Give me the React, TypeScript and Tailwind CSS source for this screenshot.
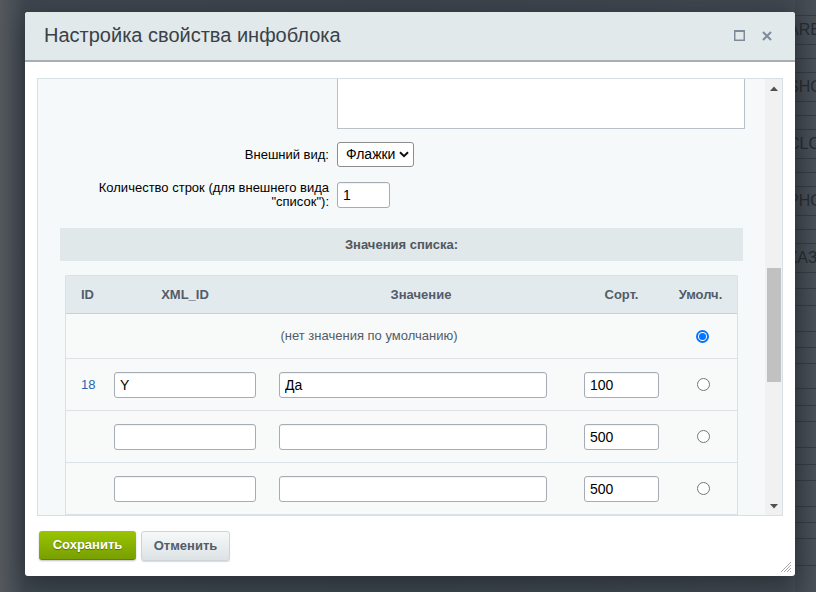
import { type ReactNode } from "react";

const listRows = [
  { id: "18", xml: "Y", value: "Да", sort: "100" },
  { id: "", xml: "", value: "", sort: "500" },
  { id: "", xml: "", value: "", sort: "500" },
];

// rows of the page under the overlay (only a thin strip shows on the right)
const pageRows: { h: string; t?: string }[] = [
  { h: "h-[16px]" },
  { h: "h-[29px]", t: "ARE" },
  { h: "h-[14px]" },
  { h: "h-[14px]" },
  { h: "h-[29px]", t: "SHO" },
  { h: "h-[14px]" },
  { h: "h-[14px]" },
  { h: "h-[29px]", t: "CLO" },
  { h: "h-[14px]" },
  { h: "h-[14px]" },
  { h: "h-[29px]", t: "PHO" },
  { h: "h-[14px]" },
  { h: "h-[14px]" },
  { h: "h-[29px]", t: "КАЗ" },
  { h: "h-[16px]" },
  { h: "h-[17px]" },
  { h: "h-[26px]" },
  { h: "h-[16px]" },
  { h: "h-[16px]" },
  { h: "h-[25px]" },
  { h: "h-[17px]" },
  { h: "h-[16px]" },
  { h: "h-[26px]" },
  { h: "h-[17px]" },
  { h: "h-[16px]" },
  { h: "h-[26px]" },
  { h: "h-[16px]" },
  { h: "h-[16px]" },
  { h: "h-[27px]" },
];

function Radio({ checked }: { checked?: boolean }) {
  if (checked) {
    return (
      <span className="w-[13px] h-[13px] rounded-full bg-[#0075ff] flex items-center justify-center">
        <span className="w-[9px] h-[9px] rounded-full bg-white flex items-center justify-center">
          <span className="w-[7px] h-[7px] rounded-full bg-[#0075ff]" />
        </span>
      </span>
    );
  }
  return <span className="w-[13px] h-[13px] rounded-full border border-[#767676] bg-white" />;
}

function Field({ value, className }: { value: string; className: string }) {
  return (
    <input
      readOnly
      defaultValue={value}
      className={
        "h-[26px] bg-white border border-[#a5acb4] rounded-[3px] px-[5px] text-[14px] text-black outline-none shadow-[inset_0_1px_1px_rgba(0,0,0,0.06)] " +
        className
      }
    />
  );
}

function Label({ children }: { children: ReactNode }) {
  return <div className="w-[291px] text-right text-[13px] leading-[14px] text-black">{children}</div>;
}

export default function App() {
  return (
    <div className="w-[816px] h-[592px] overflow-hidden flex bg-[linear-gradient(90deg,#585c61_0%,#4b5157_2%,#3d464e_3%,#3b444c_50%,#3f474f_96%,#4b5157_100%)] font-['Liberation_Sans',Arial,sans-serif]">
      <div className="w-[25px] shrink-0 bg-[linear-gradient(90deg,#55595e,#3e464e)]" />

      {/* dialog */}
      <div className="mt-[12px] w-[770px] h-[564px] shrink-0 bg-white rounded-[3px] shadow-[0_6px_24px_rgba(0,0,0,0.35)] flex flex-col relative overflow-hidden">
        <div className="h-[50px] bg-[#e1e9eb] border-b-2 border-[#a9aeb2] flex items-center pl-[19px] pr-[23px] pb-[3px]">
          <div className="text-[20px] text-[#3b4148] flex-1">Настройка свойства инфоблока</div>
          <svg width="11" height="11" viewBox="0 0 11 11" className="mr-[17px] mt-[2px]">
            <rect x="0.75" y="1" width="9.5" height="9.25" fill="none" stroke="#7e8b9b" strokeWidth="1.5" />
            <rect x="0" y="0" width="11" height="2" fill="#7e8b9b" />
          </svg>
          <svg width="10" height="10" viewBox="0 0 10 10" className="mt-[2px]">
            <path d="M1 1 L9 9 M9 1 L1 9" stroke="#7e8b9b" strokeWidth="2" />
          </svg>
        </div>

        <div className="px-[12px] pt-[16px]">
          <div className="h-[438px] border border-[#d6e1e5] flex">
            <div className="w-[727px] bg-[#f5f9f9] overflow-hidden flex flex-col">
              <div className="ml-[299px] w-[408px] h-[50px] shrink-0 bg-white border-x border-b border-[#b8c1c7]" />

              <div className="mt-[13px] h-[25px] flex items-center">
                <Label>Внешний вид:</Label>
                <div className="ml-[8px] w-[77px] h-[25px] bg-white border border-[#8d8d8d] rounded-[3px] flex items-center pl-[8px] pr-[4px] text-[14px] text-black">
                  <span className="flex-1">Флажки</span>
                  <svg width="10" height="7" viewBox="0 0 10 7">
                    <path d="M1 1.2 L5 5.2 L9 1.2" fill="none" stroke="#111" strokeWidth="2" />
                  </svg>
                </div>
              </div>

              <div className="mt-[15px] h-[26px] flex items-center">
                <Label>
                  Количество строк (для внешнего вида
                  <br />
                  "список"):
                </Label>
                <Field value="1" className="ml-[8px] w-[53px]" />
              </div>

              <div className="mt-[20px] ml-[22px] w-[683px] h-[33px] shrink-0 bg-[#e0e8ea] flex items-center justify-center text-[13px] font-bold text-[#50575f]">
                Значения списка:
              </div>

              <div className="mt-[14px] ml-[27px] w-[673px] border-x border-t border-[#d9e1e4] rounded-t-[2px] bg-[#f8fafa]">
                <div className="h-[38px] bg-[#e3eaed] border-b border-[#c9d1d5] flex items-center text-[13px] font-bold text-[#535c69]">
                  <div className="w-[48px] pl-[15px]">ID</div>
                  <div className="w-[142px] text-center">XML_ID</div>
                  <div className="w-[23px]" />
                  <div className="w-[284px] text-center">Значение</div>
                  <div className="w-[21px]" />
                  <div className="w-[75px] text-center">Сорт.</div>
                  <div className="w-[78px] text-center pl-[5px]">Умолч.</div>
                </div>

                <div className="h-[45px] border-b border-[#dbe2e5] flex items-center text-[13px] text-[#535c69]">
                  <div className="flex-1 text-center pl-[1px]">(нет значения по умолчанию)</div>
                  <div className="w-[66px] flex justify-center pr-[3px]">
                    <Radio checked />
                  </div>
                </div>

                {listRows.map((r, i) => (
                  <div key={i} className="h-[52px] border-b border-[#dbe2e5] flex items-center">
                    <div className="w-[48px] pl-[15px] text-[13px] text-[#2067b0]">{r.id}</div>
                    <Field value={r.xml} className="w-[142px]" />
                    <div className="w-[23px]" />
                    <Field value={r.value} className="w-[268px]" />
                    <div className="w-[37px]" />
                    <Field value={r.sort} className="w-[75px]" />
                    <div className="flex-1 flex justify-center pl-[10px]">
                      <Radio />
                    </div>
                  </div>
                ))}
              </div>
            </div>

            {/* scrollbar */}
            <div className="w-[17px] bg-[#f1f1f1] flex flex-col items-center">
              <svg width="8" height="5" viewBox="0 0 8 5" className="mt-[7px]">
                <path d="M0 5 L4 0.5 L8 5 Z" fill="#505050" />
              </svg>
              <div className="mt-[177px] w-[14px] h-[114px] bg-[#c1c1c1]" />
              <div className="flex-1" />
              <svg width="8" height="5" viewBox="0 0 8 5" className="mb-[6px]">
                <path d="M0 0 L4 4.5 L8 0 Z" fill="#505050" />
              </svg>
            </div>
          </div>
        </div>

        <div className="pl-[14px] pt-[15px] flex gap-[5px]">
          <button className="w-[97px] h-[29px] rounded-[3px] bg-gradient-to-b from-[#9ac400] to-[#78a000] border-b border-[#5f8300] shadow-[0_1px_2px_rgba(0,0,0,0.25)] text-white text-[13px] font-bold [text-shadow:0_1px_1px_rgba(0,0,0,0.35)]">
            Сохранить
          </button>
          <button className="w-[89px] h-[30px] rounded-[3px] bg-gradient-to-b from-[#f7f9f9] to-[#dce2e5] border border-[#cdd3d7] shadow-[0_1px_1px_rgba(0,0,0,0.15)] text-[#535c69] text-[13px] font-bold">
            Отменить
          </button>
        </div>

        <svg width="12" height="12" viewBox="0 0 12 12" className="absolute right-[3px] bottom-[3px]">
          <path d="M11 1 L1 11 M11 4 L4 11 M11 7 L7 11 M11 10 L10 11" stroke="#a6a6a6" strokeWidth="1" />
        </svg>
      </div>

      {/* page under the overlay */}
      <div className="flex-1 overflow-hidden flex flex-col bg-[linear-gradient(90deg,#3e464e,#4a5056)]">
        {pageRows.map((p, i) => (
          <div
            key={i}
            className={"shrink-0 border-b border-[#343b42] flex items-center overflow-hidden " + p.h}
          >
            {p.t && (
              <span className="-ml-[7px] whitespace-nowrap text-[16px] text-[#262c31]">{p.t}</span>
            )}
          </div>
        ))}
      </div>
    </div>
  );
}
